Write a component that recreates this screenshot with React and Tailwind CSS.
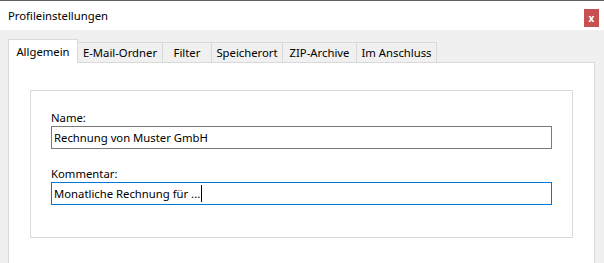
import React from 'react';

const tabs = [
  { label: 'E-Mail-Ordner', w: 'w-[85px]' },
  { label: 'Filter', w: 'w-[49px]' },
  { label: 'Speicherort', w: 'w-[71px]' },
  { label: 'ZIP-Archive', w: 'w-[74px]' },
  { label: 'Im Anschluss', w: 'w-[80px]' },
];

export default function App() {
  return (
    <div
      className="w-[604px] h-[263px] overflow-hidden bg-[#f0f0f0] border-t border-[#5c6168] flex flex-col text-[11.3px] text-black"
      style={{ fontFamily: '"Segoe UI", "Noto Sans", sans-serif' }}
    >
      {/* title bar */}
      <div className="h-[29px] bg-white flex items-start justify-between pl-[8px] pr-[5px]">
        <span className="mt-[7px] leading-[16px]">Profileinstellungen</span>
        <button className="mt-[8px] w-[15px] h-[18px] bg-[#c75050] text-white text-[10px] font-bold leading-[18px] flex items-center justify-center">
          x
        </button>
      </div>

      {/* tabs */}
      <div className="flex items-end pl-[8px] pt-[9px] h-[33px] relative z-10">
        <div className="w-[70px] h-[24px] bg-white border border-b-0 border-[#d9d9d9] flex items-center justify-center leading-[16px]">
          Allgemein
        </div>
        {tabs.map((t) => (
          <div
            key={t.label}
            className={`${t.w} h-[20px] mb-[1px] border border-l-0 border-b-0 border-[#d9d9d9] flex items-center justify-center leading-[16px]`}
          >
            {t.label}
          </div>
        ))}
      </div>

      {/* panel */}
      <div className="flex-1 ml-[8px] mr-[9px] -mt-[1px] bg-white border border-b-0 border-[#d9d9d9] pt-[27px] pl-[21px] pr-[21px]">
        <div className="border border-[#dadada] pt-[19px] pb-[32px] px-[20px]">
          <div className="leading-[16px]">Name:</div>
          <div className="h-[23px] border border-[#7a7a7a] flex items-center pl-[2px] leading-[16px]">
            Rechnung von Muster GmbH
          </div>
          <div className="leading-[16px] mt-[17px]">Kommentar:</div>
          <div className="h-[23px] border border-[#0078d7] flex items-center pl-[2px] leading-[16px]">
            Monatliche Rechnung für ...
            <span className="inline-block w-[1px] h-[17px] bg-black ml-[1px]" />
          </div>
        </div>
      </div>
    </div>
  );
}
